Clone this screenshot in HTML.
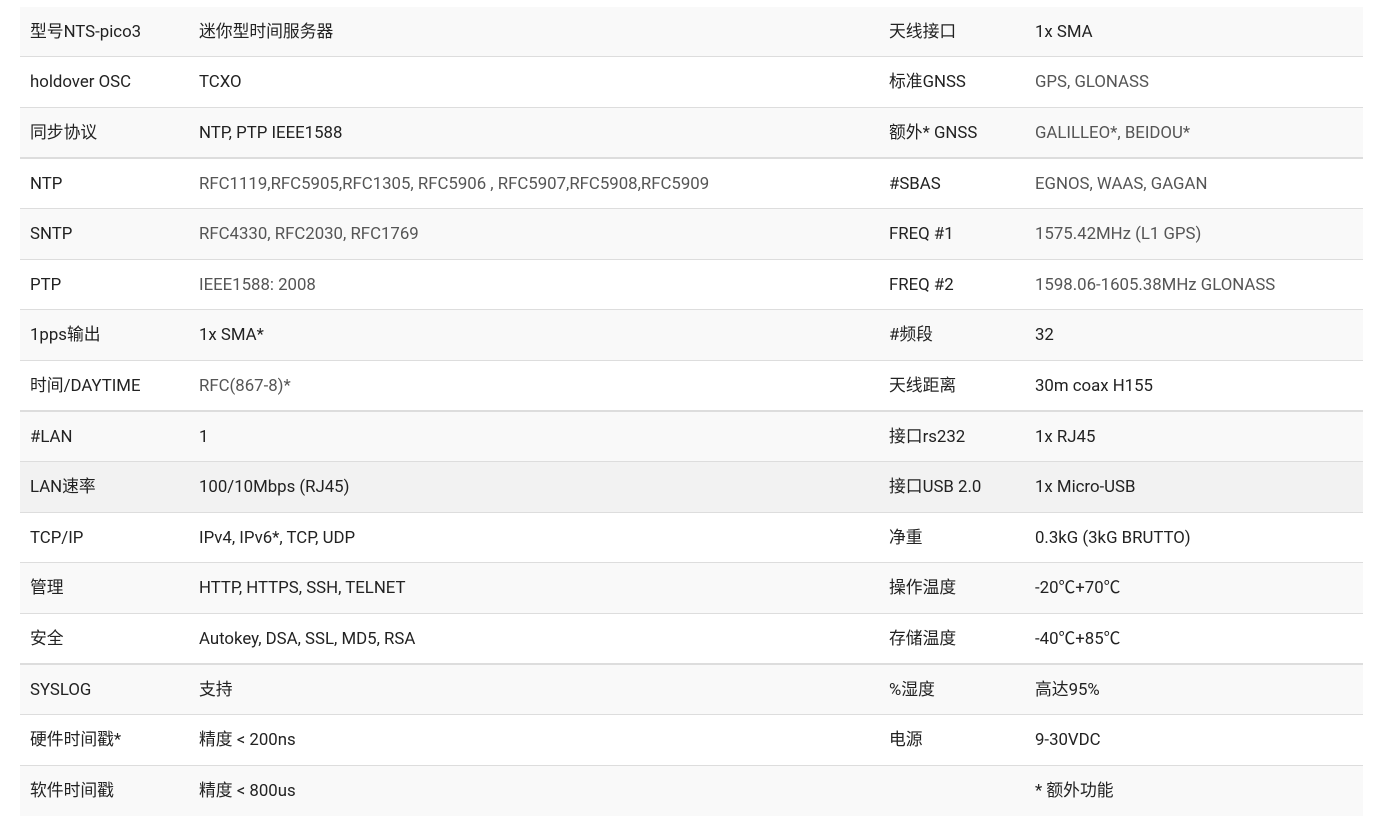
<!DOCTYPE html>
<html><head><meta charset="utf-8"><style>
body{margin:0;background:#fff;width:1377px;height:825px;overflow:hidden;font-family:"Roboto","Liberation Sans","Noto Sans CJK SC",sans-serif;font-size:16.8px;color:#222}
.r{position:absolute;left:20px;width:1343px;border-bottom:1px solid #ddd;box-sizing:border-box}
.r.t{border-bottom:2px solid #ddd}
.o{background:#f9f9f9}
.h{background:#f2f2f2}
.c{position:absolute;top:0;line-height:50px;white-space:nowrap}
.a{left:10px}.b{left:179px}.d{left:869px}.e{left:1015px}
.g{color:#555}
</style></head><body>
<div class="r o" style="top:7px;height:50px"><span class="c a">型号NTS-pico3</span><span class="c b">迷你型时间服务器</span><span class="c d">天线接口</span><span class="c e">1x SMA</span></div>
<div class="r" style="top:57px;height:51px"><span class="c a">holdover OSC</span><span class="c b">TCXO</span><span class="c d">标准GNSS</span><span class="c e g">GPS, GLONASS</span></div>
<div class="r o t" style="top:108px;height:51px"><span class="c a">同步协议</span><span class="c b">NTP, PTP IEEE1588</span><span class="c d">额外* GNSS</span><span class="c e g">GALILLEO*, BEIDOU*</span></div>
<div class="r" style="top:159px;height:50px"><span class="c a">NTP</span><span class="c b g">RFC1119,RFC5905,RFC1305, RFC5906 , RFC5907,RFC5908,RFC5909</span><span class="c d">#SBAS</span><span class="c e g">EGNOS, WAAS, GAGAN</span></div>
<div class="r o" style="top:209px;height:51px"><span class="c a">SNTP</span><span class="c b g">RFC4330, RFC2030, RFC1769</span><span class="c d">FREQ #1</span><span class="c e g">1575.42MHz (L1 GPS)</span></div>
<div class="r" style="top:260px;height:50px"><span class="c a">PTP</span><span class="c b g">IEEE1588: 2008</span><span class="c d">FREQ #2</span><span class="c e g">1598.06-1605.38MHz GLONASS</span></div>
<div class="r o" style="top:310px;height:51px"><span class="c a">1pps输出</span><span class="c b">1x SMA*</span><span class="c d">#频段</span><span class="c e">32</span></div>
<div class="r t" style="top:361px;height:51px"><span class="c a">时间/DAYTIME</span><span class="c b g">RFC(867-8)*</span><span class="c d">天线距离</span><span class="c e">30m coax H155</span></div>
<div class="r o" style="top:412px;height:50px"><span class="c a">#LAN</span><span class="c b">1</span><span class="c d">接口rs232</span><span class="c e">1x RJ45</span></div>
<div class="r h" style="top:462px;height:51px"><span class="c a">LAN速率</span><span class="c b">100/10Mbps (RJ45)</span><span class="c d">接口USB 2.0</span><span class="c e">1x Micro-USB</span></div>
<div class="r" style="top:513px;height:50px"><span class="c a">TCP/IP</span><span class="c b">IPv4, IPv6*, TCP, UDP</span><span class="c d">净重</span><span class="c e">0.3kG (3kG BRUTTO)</span></div>
<div class="r o" style="top:563px;height:51px"><span class="c a">管理</span><span class="c b">HTTP, HTTPS, SSH, TELNET</span><span class="c d">操作温度</span><span class="c e">-20℃+70℃</span></div>
<div class="r t" style="top:614px;height:51px"><span class="c a">安全</span><span class="c b">Autokey, DSA, SSL, MD5, RSA</span><span class="c d">存储温度</span><span class="c e">-40℃+85℃</span></div>
<div class="r o" style="top:665px;height:50px"><span class="c a">SYSLOG</span><span class="c b">支持</span><span class="c d">%湿度</span><span class="c e">高达95%</span></div>
<div class="r" style="top:715px;height:51px"><span class="c a">硬件时间戳*</span><span class="c b">精度 &lt; 200ns</span><span class="c d">电源</span><span class="c e">9-30VDC</span></div>
<div class="r o" style="top:766px;height:50px;border-bottom:none"><span class="c a">软件时间戳</span><span class="c b">精度 &lt; 800us</span><span class="c d"></span><span class="c e">* 额外功能</span></div>
</body></html>
